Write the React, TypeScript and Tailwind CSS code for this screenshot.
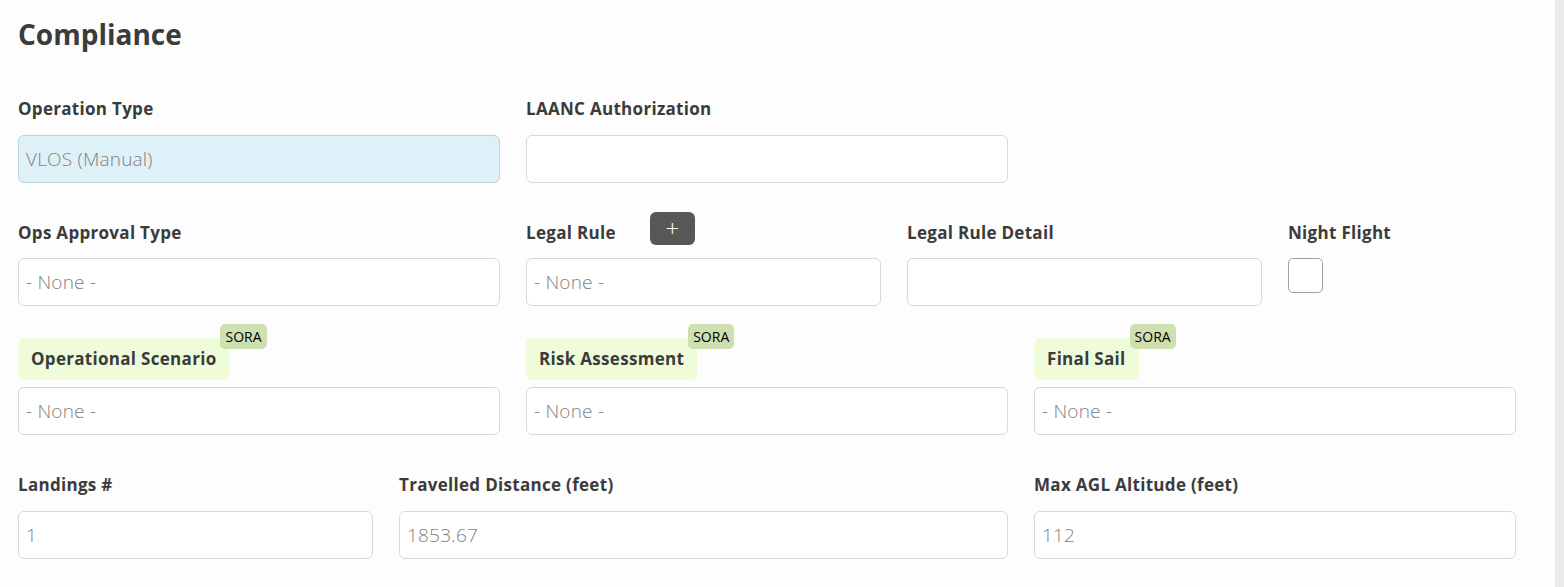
import React from "react";

const font = { fontFamily: "'Open Sans', 'Noto Sans', sans-serif" };

function Label({ children }: { children: React.ReactNode }) {
  return (
    <div className="text-[17px] leading-[24px] font-bold tracking-[0.3px] text-[#3b3b3b]">{children}</div>
  );
}

function Box({ value, tinted }: { value?: string; tinted?: boolean }) {
  return (
    <div
      className={
        "h-[48px] rounded-[6px] border flex items-center pl-[7px] text-[19px] font-light tracking-[0.2px] text-[#7f7f7f] " +
        (tinted ? "bg-[#dff1f8] border-[#bcd3dc]" : "bg-white border-[#d9d9d9]")
      }
    >
      {value}
    </div>
  );
}

function SoraLabel({ children }: { children: React.ReactNode }) {
  return (
    <div className="pt-[14px] mb-[7px] flex">
      <div className="relative h-[42px] rounded-[6px] bg-[#effcd9] px-[13px] flex items-center text-[17px] font-bold tracking-[0.3px] text-[#3b3b3b]">
        {children}
        <span className="absolute top-[-14px] left-[calc(100%-9px)] h-[25px] px-[5px] rounded-[5px] bg-[#cfe0b0] text-[14px] leading-[25px] font-normal tracking-normal text-black">
          SORA
        </span>
      </div>
    </div>
  );
}

export default function App() {
  return (
    <div className="flex min-h-[587px] bg-[#fdfdfd]" style={font}>
      <div className="flex-1 pl-[18px] pt-[14px]">
        <h1 className="text-[28px] leading-[40px] font-bold text-[#3b3b3b]">Compliance</h1>

        <div className="grid grid-cols-12 gap-x-[26px] w-[1498px] mt-[43px]">
          <div className="col-span-4">
            <div className="mb-[14px]"><Label>Operation Type</Label></div>
            <Box value="VLOS (Manual)" tinted />
          </div>
          <div className="col-span-4">
            <div className="mb-[14px]"><Label>LAANC Authorization</Label></div>
            <Box />
          </div>
        </div>

        <div className="grid grid-cols-12 gap-x-[26px] w-[1498px] mt-[29px]">
          <div className="col-span-4">
            <div className="h-[33px] flex items-end mb-[13px]"><Label>Ops Approval Type</Label></div>
            <Box value="- None -" />
          </div>
          <div className="col-span-3">
            <div className="h-[33px] flex items-end gap-[34px] mb-[13px]">
              <Label>Legal Rule</Label>
              <button className="w-[45px] h-[33px] rounded-[6px] bg-[#575757] text-white text-[24px] leading-none font-light flex items-center justify-center pb-[2px]">
                +
              </button>
            </div>
            <Box value="- None -" />
          </div>
          <div className="col-span-3">
            <div className="h-[33px] flex items-end mb-[13px]"><Label>Legal Rule Detail</Label></div>
            <Box />
          </div>
          <div className="col-span-2">
            <div className="h-[33px] flex items-end mb-[13px]"><Label>Night Flight</Label></div>
            <div className="w-[35px] h-[35px] rounded-[5px] border border-[#a0a0a0] bg-white" />
          </div>
        </div>

        <div className="grid grid-cols-12 gap-x-[26px] w-[1498px] mt-[18px]">
          <div className="col-span-4">
            <SoraLabel>Operational Scenario</SoraLabel>
            <Box value="- None -" />
          </div>
          <div className="col-span-4">
            <SoraLabel>Risk Assessment</SoraLabel>
            <Box value="- None -" />
          </div>
          <div className="col-span-4">
            <SoraLabel>Final Sail</SoraLabel>
            <Box value="- None -" />
          </div>
        </div>

        <div className="grid grid-cols-12 gap-x-[26px] w-[1498px] mt-[38px]">
          <div className="col-span-3">
            <div className="mb-[14px]"><Label>Landings #</Label></div>
            <Box value="1" />
          </div>
          <div className="col-span-5">
            <div className="mb-[14px]"><Label>Travelled Distance (feet)</Label></div>
            <Box value="1853.67" />
          </div>
          <div className="col-span-4">
            <div className="mb-[14px]"><Label>Max AGL Altitude (feet)</Label></div>
            <Box value="112" />
          </div>
        </div>
      </div>
      <div className="w-[9px] bg-[#ebebeb]" />
    </div>
  );
}
